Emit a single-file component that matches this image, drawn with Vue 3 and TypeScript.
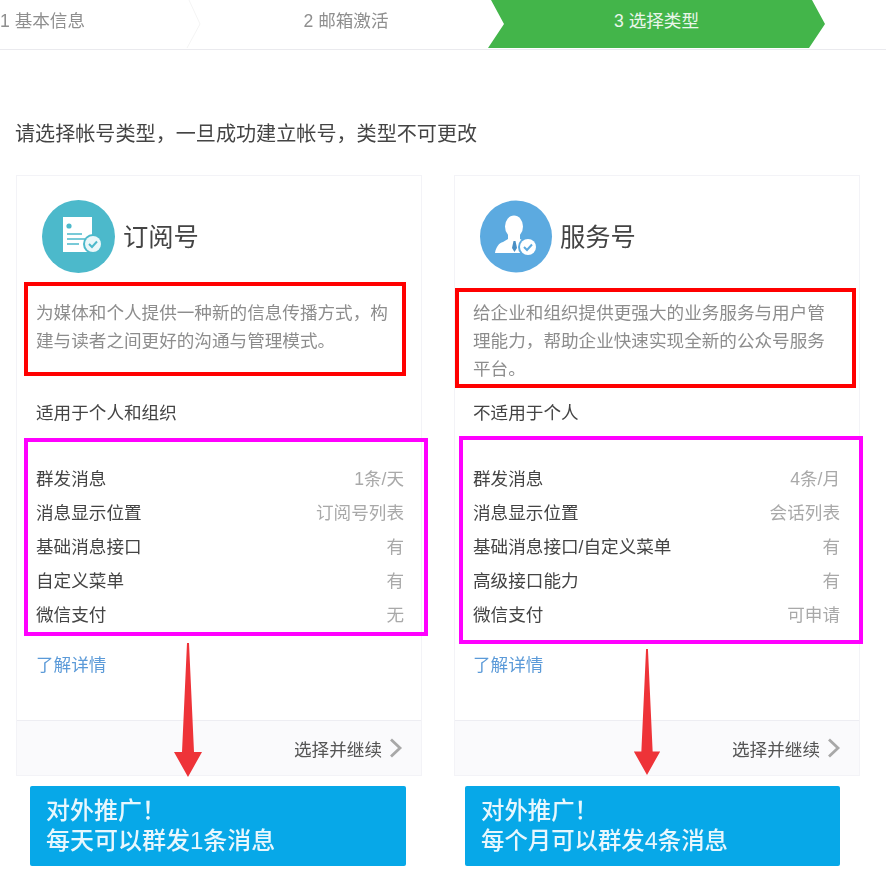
<script setup lang="ts">
interface Row {
  label: string;
  value: string;
}

interface Plan {
  key: string;
  title: string;
  desc: string;
  scope: string;
  rows: Row[];
  promo: string[];
}

const steps = ["1 基本信息", "2 邮箱激活", "3 选择类型"];

const plans: Plan[] = [
  {
    key: "sub",
    title: "订阅号",
    desc: "为媒体和个人提供一种新的信息传播方式，构建与读者之间更好的沟通与管理模式。",
    scope: "适用于个人和组织",
    rows: [
      { label: "群发消息", value: "1条/天" },
      { label: "消息显示位置", value: "订阅号列表" },
      { label: "基础消息接口", value: "有" },
      { label: "自定义菜单", value: "有" },
      { label: "微信支付", value: "无" },
    ],
    promo: ["对外推广！", "每天可以群发1条消息"],
  },
  {
    key: "svc",
    title: "服务号",
    desc: "给企业和组织提供更强大的业务服务与用户管理能力，帮助企业快速实现全新的公众号服务平台。",
    scope: "不适用于个人",
    rows: [
      { label: "群发消息", value: "4条/月" },
      { label: "消息显示位置", value: "会话列表" },
      { label: "基础消息接口/自定义菜单", value: "有" },
      { label: "高级接口能力", value: "有" },
      { label: "微信支付", value: "可申请" },
    ],
    promo: ["对外推广！", "每个月可以群发4条消息"],
  },
];
</script>

<template>
  <div class="page">
    <div class="stepbar">
      <div
        v-for="(step, i) in steps"
        :key="step"
        class="step"
        :class="{ first: i === 0, active: i === 2 }"
      >
        {{ step }}
        <svg v-if="i === 0" class="sep" width="16" height="48" viewBox="0 0 16 48">
          <polyline points="3,0 14,24 1,48" fill="none" stroke="#f4f4f4" stroke-width="1" />
        </svg>
      </div>
    </div>

    <p class="intro">请选择帐号类型，一旦成功建立帐号，类型不可更改</p>

    <div class="columns">
      <div v-for="plan in plans" :key="plan.key" class="col" :class="plan.key">
        <div class="card">
          <div class="card-body">
            <div class="head">
              <svg v-if="plan.key === 'sub'" class="icon" viewBox="0 0 73 73">
                <circle cx="36.5" cy="36.5" r="36.5" fill="#4cb9cb" />
                <path d="M21 17h29v35H21z" fill="#fff" />
                <circle cx="27" cy="26" r="2.6" fill="#4cb9cb" />
                <path d="M25 34h15M25 39h18M25 44h12" stroke="#4cb9cb" stroke-width="1.6" />
                <circle cx="51" cy="44" r="10" fill="#4cb9cb" />
                <circle cx="51" cy="44" r="8" fill="#eaf7f9" />
                <path d="M47 44l3 3 5-5.5" fill="none" stroke="#4cb9cb" stroke-width="2" />
              </svg>
              <svg v-else class="icon" viewBox="0 0 73 73">
                <circle cx="36" cy="36.5" r="36" fill="#5caae0" />
                <ellipse cx="34" cy="26.5" rx="9" ry="11" fill="#fff" />
                <path d="M28 34h12v5l6 3 5 11H15c1-6 4-10 8-11l5-3z" fill="#fff" />
                <path d="M33.500 41h2l1.500 7-2.500 4-2.500-4z" fill="#4a8fc4" />
                <circle cx="48" cy="47" r="10" fill="#5caae0" />
                <circle cx="48" cy="47" r="8" fill="#fff" />
                <path d="M44 47l3 3 5-5.500" fill="none" stroke="#5caae0" stroke-width="2" />
              </svg>
              <h2 class="title">{{ plan.title }}</h2>
            </div>
            <p class="desc">{{ plan.desc }}</p>
            <p class="scope">{{ plan.scope }}</p>
            <ul class="rows">
              <li v-for="row in plan.rows" :key="row.label" class="row">
                <span class="label">{{ row.label }}</span>
                <span class="value">{{ row.value }}</span>
              </li>
            </ul>
            <a class="more">了解详情</a>
          </div>
          <div class="card-foot">
            <span>选择并继续</span>
            <svg width="14" height="20" viewBox="0 0 14 20">
              <polyline points="2,1.500 11,10 2,18.500" fill="none" stroke="#a8a8a8" stroke-width="2.800" />
            </svg>
          </div>

          <!-- annotations drawn over the card -->
          <div class="mark mark-red"></div>
          <div class="mark mark-pink"></div>
          <svg class="arrow" width="28" height="134" viewBox="0 0 28 134">
            <path d="M13 0h2l5 109h8l-14 25L0 109h8z" fill="#ee3338" />
          </svg>
        </div>
        <div class="promo">
          <div v-for="line in plan.promo" :key="line">{{ line }}</div>
        </div>
      </div>
    </div>
  </div>
</template>

<style scoped>
.page {
  width: 886px;
  height: 888px;
  overflow: hidden;
  background: #fff;
  font-family: "Liberation Sans", "Noto Sans CJK SC", sans-serif;
  color: #333;
}

/* the reference is a soft upscaled capture, only the marks on top are sharp */
.stepbar,
.intro,
.card-body,
.card-foot,
.promo {
  filter: blur(0.5px);
}

.stepbar {
  display: flex;
  align-items: flex-start;
  height: 48px;
  padding-bottom: 1px;
  border-bottom: 1px solid #eaeaee;
}

.step {
  position: relative;
  height: 48px;
  width: 292px;
  font-size: 17.6px;
  line-height: 42px;
  text-align: center;
  color: #8f8f8f;
}

.step.first {
  width: 200px;
  margin-left: 0;
  text-align: left;
}

.step.active {
  width: 337px;
  margin-left: -4px;
  color: #eaf6ea;
  background: #43b54a;
  clip-path: polygon(3px 0, 324px 0, 337px 24px, 321px 100%, 0 100%, 16px 24px);
}

.sep {
  position: absolute;
  top: 0;
  left: 186px;
}

.intro {
  margin: 69px 0 26px 15px;
  font-size: 20.1px;
  line-height: 30px;
  color: #444;
}

.columns {
  display: grid;
  grid-template-columns: 406px 406px;
  column-gap: 32px;
  padding-left: 16px;
}

.card {
  position: relative;
  height: 601px;
  box-sizing: border-box;
  display: flex;
  flex-direction: column;
  border: 1px solid #f3f3f7;
}

.card-body {
  flex: 1;
  padding: 24px 19px 0;
}

.sub .card-body {
  padding-right: 17px;
}

.svc .card-body {
  padding-left: 18px;
}

.head {
  display: flex;
  align-items: center;
  gap: 8px;
  padding-left: 6px;
}

.svc .head {
  padding-left: 7px;
  gap: 7px;
}

.icon {
  width: 73px;
  height: 73px;
}

.title {
  margin: 0 0 4px;
  font-size: 25.3px;
  font-weight: 400;
  color: #444;
}

.desc {
  height: 84px;
  margin: 26px 0 0;
  font-size: 17.6px;
  line-height: 28px;
  color: #8d8d8d;
}

.scope {
  margin: 16px 0 0;
  font-size: 17.6px;
  line-height: 28px;
  color: #444;
}

.rows {
  margin: 35px 0 0;
  padding: 0;
  list-style: none;
}

.row {
  display: flex;
  justify-content: space-between;
  font-size: 17.6px;
  line-height: 34px;
}

.label {
  color: #444;
}

.value {
  color: #a9a9a9;
}

.more {
  display: block;
  margin-top: 19px;
  font-size: 17.6px;
  line-height: 28px;
  color: #5b9ad8;
}

.card-foot {
  height: 54px;
  display: flex;
  align-items: center;
  justify-content: flex-end;
  gap: 7px;
  padding-right: 18px;
  border-top: 1px solid #ededf2;
  background: #fafafc;
  font-size: 17.6px;
  color: #555;
}

.mark {
  position: absolute;
  box-sizing: border-box;
  border-width: 4px;
  border-style: solid;
}

.mark-red {
  border-color: #f00;
}

.mark-pink {
  border-color: #f0f;
}

.sub .mark-red {
  left: 7px;
  top: 106px;
  width: 382px;
  height: 94px;
}

.svc .mark-red {
  left: 0;
  top: 112px;
  width: 401px;
  height: 100px;
}

.sub .mark-pink {
  left: 7px;
  top: 262px;
  width: 404px;
  height: 198px;
}

.svc .mark-pink {
  left: 4px;
  top: 260px;
  width: 404px;
  height: 208px;
}

.arrow {
  position: absolute;
}

.sub .arrow {
  left: 157px;
  top: 467px;
}

.svc .arrow {
  left: 178px;
  top: 473px;
  height: 126px;
}

.promo {
  margin-top: 10px;
  height: 80px;
  box-sizing: border-box;
  padding: 10px 16px;
  border-radius: 2px;
  background: #07a8e8;
  color: #e8f7fd;
  font-weight: 500;
  line-height: 30px;
}

.sub .promo {
  margin-left: 14px;
  margin-right: 16px;
  font-size: 24px;
}

.svc .promo {
  margin-left: 11px;
  margin-right: 20px;
  font-size: 23.4px;
}
</style>

<style>
html,
body {
  margin: 0;
  background: #fff;
}
</style>
